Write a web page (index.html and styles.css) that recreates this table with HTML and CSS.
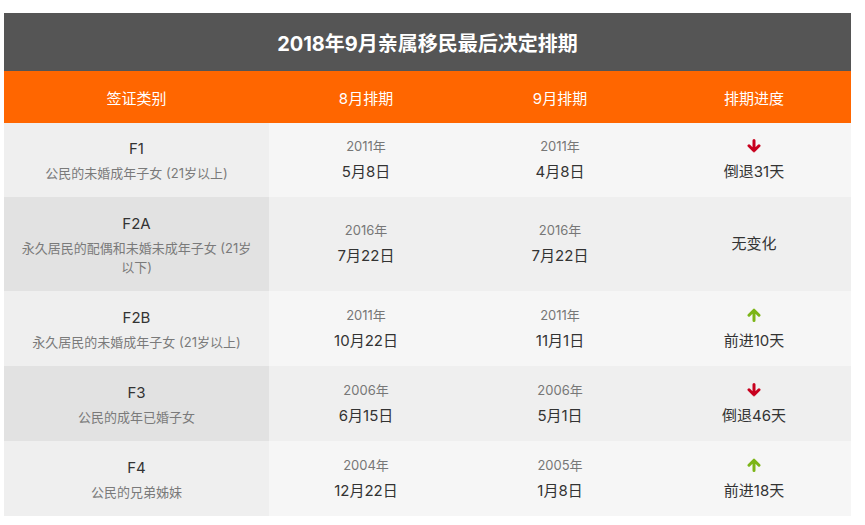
FILE: index.html
```html
<!DOCTYPE html>
<html lang="zh-CN">
<head>
<meta charset="utf-8">
<title>2018年9月亲属移民最后决定排期</title>
<link rel="stylesheet" href="styles.css">
</head>
<body>
<div class="wrap">
  <div class="title">2018年9月亲属移民最后决定排期</div>
  <table class="bulletin">
    <colgroup>
      <col class="c-cat"><col><col><col>
    </colgroup>
    <thead>
      <tr>
        <th>签证类别</th>
        <th>8月排期</th>
        <th>9月排期</th>
        <th>排期进度</th>
      </tr>
    </thead>
    <tbody>
      <tr class="odd first">
        <td class="cat"><div class="name">F1</div><div class="sub">公民的未婚成年子女 (21岁以上)</div></td>
        <td><div class="year">2011年</div><div class="date">5月8日</div></td>
        <td><div class="year">2011年</div><div class="date">4月8日</div></td>
        <td><div class="arrow"><svg class="down" viewBox="0 0 14 14" width="14" height="14"><path d="M7 1.5V11.5M2 6.8L7 11.8L12 6.8"/></svg></div><div class="date">倒退31天</div></td>
      </tr>
      <tr class="even tall">
        <td class="cat"><div class="name">F2A</div><div class="sub">永久居民的配偶和未婚未成年子女 (21岁以下)</div></td>
        <td><div class="year">2016年</div><div class="date">7月22日</div></td>
        <td><div class="year">2016年</div><div class="date">7月22日</div></td>
        <td><div class="date">无变化</div></td>
      </tr>
      <tr class="odd">
        <td class="cat"><div class="name">F2B</div><div class="sub">永久居民的未婚成年子女 (21岁以上)</div></td>
        <td><div class="year">2011年</div><div class="date">10月22日</div></td>
        <td><div class="year">2011年</div><div class="date">11月1日</div></td>
        <td><div class="arrow"><svg class="up" viewBox="0 0 14 14" width="14" height="14"><path d="M7 12.5V2.5M2 7.2L7 2.2L12 7.2"/></svg></div><div class="date">前进10天</div></td>
      </tr>
      <tr class="even">
        <td class="cat"><div class="name">F3</div><div class="sub">公民的成年已婚子女</div></td>
        <td><div class="year">2006年</div><div class="date">6月15日</div></td>
        <td><div class="year">2006年</div><div class="date">5月1日</div></td>
        <td><div class="arrow"><svg class="down" viewBox="0 0 14 14" width="14" height="14"><path d="M7 1.5V11.5M2 6.8L7 11.8L12 6.8"/></svg></div><div class="date">倒退46天</div></td>
      </tr>
      <tr class="odd">
        <td class="cat"><div class="name">F4</div><div class="sub">公民的兄弟姊妹</div></td>
        <td><div class="year">2004年</div><div class="date">12月22日</div></td>
        <td><div class="year">2005年</div><div class="date">1月8日</div></td>
        <td><div class="arrow"><svg class="up" viewBox="0 0 14 14" width="14" height="14"><path d="M7 12.5V2.5M2 7.2L7 2.2L12 7.2"/></svg></div><div class="date">前进18天</div></td>
      </tr>
    </tbody>
  </table>
</div>
</body>
</html>
```

FILE: styles.css
```css
html, body {
  margin: 0;
  padding: 0;
  background: #ffffff;
}
body {
  font-family: "Inter", "Noto Sans CJK SC", sans-serif;
  color: #333333;
}
.wrap {
  margin: 13px 0 0 4px;
  width: 847px;
}
.title {
  background: #555555;
  color: #ffffff;
  height: 58px;
  display: flex;
  align-items: center;
  justify-content: center;
  font-size: 20px;
  font-weight: 700;
}
.bulletin {
  width: 100%;
  border-collapse: collapse;
  table-layout: fixed;
  text-align: center;
}
.c-cat {
  width: 265px;
}
.bulletin th {
  background: #ff6600;
  color: #ffffff;
  font-weight: 400;
  font-size: 15px;
  height: 52px;
  padding: 0;
}
.bulletin tbody tr {
  height: 75px;
}
.bulletin tbody tr.first {
  height: 74px;
}
.bulletin tbody tr.tall {
  height: 94px;
}
.bulletin td {
  padding: 8px 15px;
  vertical-align: middle;
}
.odd td { background: #f6f6f6; }
.odd td.cat { background: #efefef; }
.even td { background: #efefef; }
.even td.cat { background: #e2e2e2; }
.name {
  font-size: 15px;
  line-height: 24px;
  color: #333333;
}
.sub {
  font-size: 13px;
  line-height: 19px;
  margin-top: 3px;
  color: #7a7a7a;
}
.year {
  font-size: 13px;
  line-height: 20px;
  color: #777777;
}
.date {
  font-size: 15px;
  line-height: 24px;
  color: #333333;
}
.year + .date, .arrow + .date {
  margin-top: 4px;
}
.arrow {
  height: 20px;
  display: flex;
  align-items: center;
  justify-content: center;
}
.arrow svg path {
  fill: none;
  stroke-width: 3;
  stroke-linecap: round;
  stroke-linejoin: round;
}
.down path { stroke: #c8001e; }
.up path { stroke: #7cb518; }
```
